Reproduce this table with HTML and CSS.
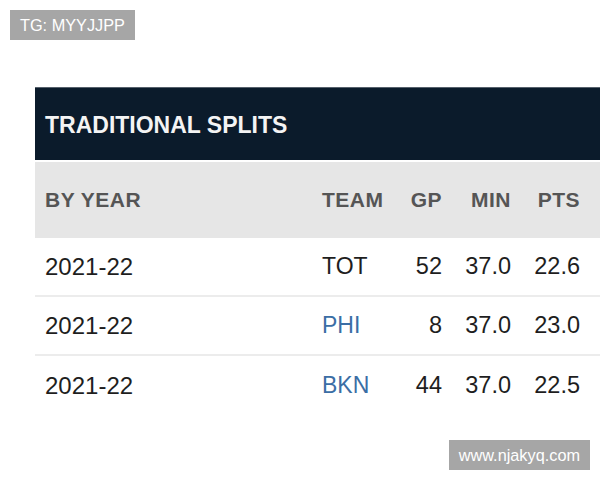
FILE: index.html
```html
<!DOCTYPE html>
<html>
<head>
<meta charset="utf-8">
<link rel="stylesheet" href="styles.css">
</head>
<body>
<div class="badge badge-tl">TG: MYYJJPP</div>
<main class="page">
  <section class="splits">
    <div class="title-bar">TRADITIONAL SPLITS</div>
    <div class="row head">
      <div class="c-year">BY YEAR</div>
      <div class="c-team">TEAM</div>
      <div class="c-num">GP</div>
      <div class="c-num">MIN</div>
      <div class="c-num">PTS</div>
    </div>
    <div class="row data">
      <div class="c-year">2021-22</div>
      <div class="c-team">TOT</div>
      <div class="c-num">52</div>
      <div class="c-num">37.0</div>
      <div class="c-num">22.6</div>
    </div>
    <div class="row data">
      <div class="c-year">2021-22</div>
      <div class="c-team link">PHI</div>
      <div class="c-num">8</div>
      <div class="c-num">37.0</div>
      <div class="c-num">23.0</div>
    </div>
    <div class="row data">
      <div class="c-year">2021-22</div>
      <div class="c-team link">BKN</div>
      <div class="c-num">44</div>
      <div class="c-num">37.0</div>
      <div class="c-num">22.5</div>
    </div>
  </section>
</main>
<div class="badge badge-br">www.njakyq.com</div>
</body>
</html>
```
FILE: styles.css
```css
html, body {
  margin: 0;
  padding: 0;
  background: #ffffff;
  font-family: "Liberation Sans", Arial, sans-serif;
  width: 600px;
  height: 480px;
  overflow: hidden;
  position: relative;
}

.badge {
  position: absolute;
  background: #a6a6a6;
  color: #ffffff;
  font-size: 16.3px;
  line-height: 30px;
  height: 30px;
  padding: 0 10px;
  white-space: nowrap;
}

.badge-tl {
  top: 10px;
  left: 10px;
}

.badge-br {
  right: 10px;
  bottom: 10px;
}

.page {
  padding: 87px 0 0 35px;
}

.splits {
  width: 565px;
}

.title-bar {
  box-sizing: border-box;
  height: 73px;
  background: #0b1b2b;
  border-top: 1px solid #56606b;
  color: #f4f4f4;
  font-weight: bold;
  font-size: 23px;
  display: flex;
  align-items: center;
  padding-left: 10px;
  padding-top: 2px;
  margin-bottom: 2px;
}

.row {
  display: grid;
  grid-template-columns: 287px 78px 42px 69px 69px;
  padding-right: 20px;
  align-items: center;
}

.row.head {
  height: 76px;
  background: #e6e6e6;
  color: #555555;
  font-weight: bold;
  font-size: 21px;
  letter-spacing: 0.5px;
}

.row.data {
  height: 59px;
  color: #1e1e1e;
  font-size: 23.5px;
  border-bottom: 2px solid #ececec;
  box-sizing: border-box;
}

.row.data:last-child {
  border-bottom: none;
}

.c-year {
  padding-left: 10px;
  font-size: 24px;
}

.row.head .c-year {
  font-size: 21px;
}

.c-team {
  padding-left: 0;
  font-size: 23px;
}

.row.head .c-team {
  font-size: 21px;
}

.c-num {
  text-align: right;
}

.link {
  color: #3b6ea5;
}
```
